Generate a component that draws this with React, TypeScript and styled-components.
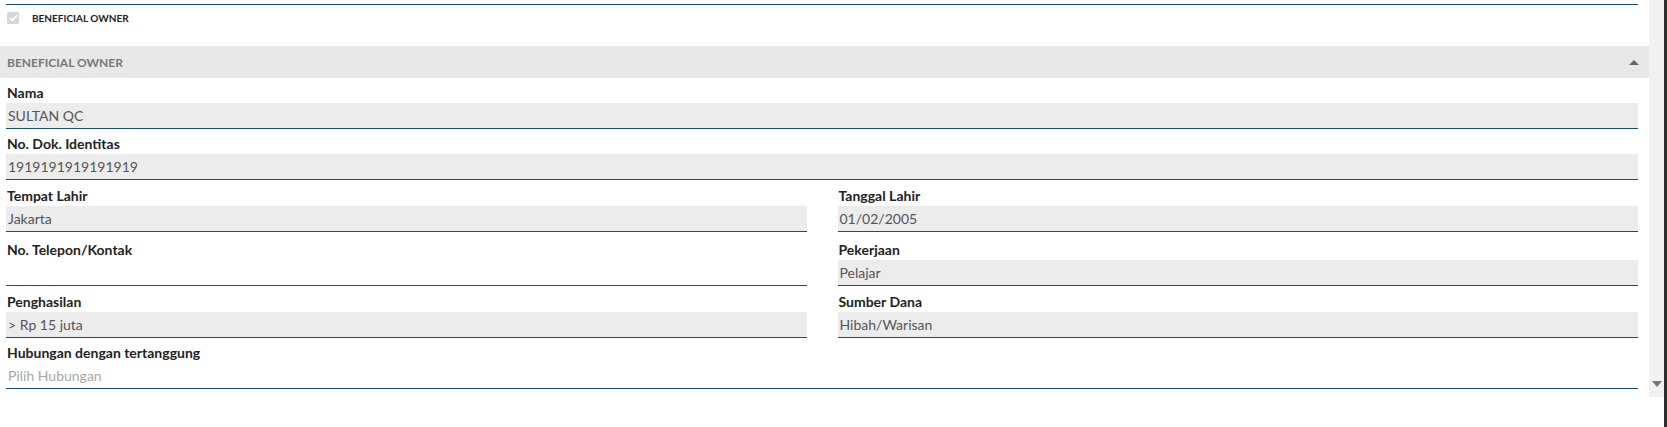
import styled, { createGlobalStyle } from 'styled-components';

const GlobalStyle = createGlobalStyle`
  html, body {
    margin: 0;
    padding: 0;
    background: #ffffff;
  }
  body {
    font-family: Lato, "Open Sans", sans-serif;
    color: #222;
  }
`;

const Page = styled.div`
  display: flex;
  height: 427px;
  overflow: hidden;
`;

const Main = styled.div`
  flex: 1;
  min-width: 0;
`;

const Section = styled.div`
  padding: 0 11px 0 6px;
`;

const Divider = styled.div`
  margin-top: 4px;
  border-top: 1px solid #1a4e6a;
`;

const CheckRow = styled.label`
  display: flex;
  align-items: center;
  gap: 13px;
  height: 24px;
  margin-top: 1px;
  padding-left: 1px;
  font-size: 10px;
  font-weight: 700;
  text-transform: uppercase;
  color: #222;
`;

const CheckBox = styled.span`
  width: 12px;
  height: 12px;
  border-radius: 2px;
  background: #d6d6d6;
  display: flex;
  align-items: center;
  justify-content: center;
`;

const PanelHeader = styled.div`
  display: flex;
  align-items: center;
  justify-content: space-between;
  height: 32px;
  margin-top: 16px;
  padding: 0 10px 0 7px;
  background: #e8e8e8;
  color: #777;
  font-size: 12px;
  font-weight: 700;
  text-transform: uppercase;
`;

const Caret = styled.span<{ $down?: boolean }>`
  width: 0;
  height: 0;
  border-left: 5px solid transparent;
  border-right: 5px solid transparent;
  ${(p) => (p.$down ? 'border-top: 6px solid #777;' : 'border-bottom: 5px solid #666;')}
`;

const Row = styled.div`
  display: grid;
  grid-template-columns: 1fr 1fr;
  column-gap: 31px;
`;

const Group = styled.div<{ $top?: number }>`
  padding-top: ${(p) => p.$top ?? 0}px;
`;

const Label = styled.div`
  height: 25px;
  display: flex;
  align-items: flex-end;
  padding: 0 0 2px 1px;
  box-sizing: border-box;
  font-size: 14px;
  font-weight: 700;
  color: #222;
`;

const Field = styled.div<{ $empty?: boolean; $placeholder?: boolean }>`
  height: 26px;
  box-sizing: border-box;
  display: flex;
  align-items: center;
  padding-left: 2px;
  background: ${(p) => (p.$empty ? 'transparent' : '#ececec')};
  border-bottom: 1px solid #1a4e6a;
  font-size: 14px;
  color: ${(p) => (p.$placeholder ? '#a8a8a8' : '#555')};
`;

const ScrollTrack = styled.div`
  width: 15px;
  height: 397px;
  background: #f1f1f1;
  display: flex;
  flex-direction: column;
  justify-content: flex-end;
  align-items: center;
  padding-bottom: 10px;
  box-sizing: border-box;
`;

const Edge = styled.div`
  width: 3px;
  background: #2e2e2e;
`;

type FieldProps = {
  label: string;
  value?: string;
  placeholder?: string;
  empty?: boolean;
  top?: number;
};

const FormField = ({ label, value, placeholder, empty, top }: FieldProps) => (
  <Group $top={top}>
    <Label>{label}</Label>
    <Field $empty={empty || !!placeholder} $placeholder={!!placeholder}>
      {value ?? placeholder ?? ''}
    </Field>
  </Group>
);

const App = () => {
  return (
    <>
      <GlobalStyle />
      <Page>
        <Main>
          <Section>
            <Divider />
            <CheckRow>
              <CheckBox>
                <svg width="9" height="8" viewBox="0 0 9 8">
                  <path d="M1 4.2 L3.4 6.4 L8 1.4" fill="none" stroke="#fff" strokeWidth="1.6" />
                </svg>
              </CheckBox>
              Beneficial Owner
            </CheckRow>
          </Section>
          <PanelHeader>
            Beneficial Owner
            <Caret />
          </PanelHeader>
          <Section>
            <FormField label="Nama" value="SULTAN QC" />
            <FormField label="No. Dok. Identitas" value="1919191919191919" top={-1} />
            <Row>
              <FormField label="Tempat Lahir" value="Jakarta" top={1} />
              <FormField label="Tanggal Lahir" value="01/02/2005" top={1} />
            </Row>
            <Row>
              <FormField label="No. Telepon/Kontak" empty top={3} />
              <FormField label="Pekerjaan" value="Pelajar" top={3} />
            </Row>
            <Row>
              <FormField label="Penghasilan" value="> Rp 15 juta" top={1} />
              <FormField label="Sumber Dana" value="Hibah/Warisan" top={1} />
            </Row>
            <FormField label="Hubungan dengan tertanggung" placeholder="Pilih Hubungan" />
          </Section>
        </Main>
        <ScrollTrack>
          <Caret $down />
        </ScrollTrack>
        <Edge />
      </Page>
    </>
  );
};

export default App;
